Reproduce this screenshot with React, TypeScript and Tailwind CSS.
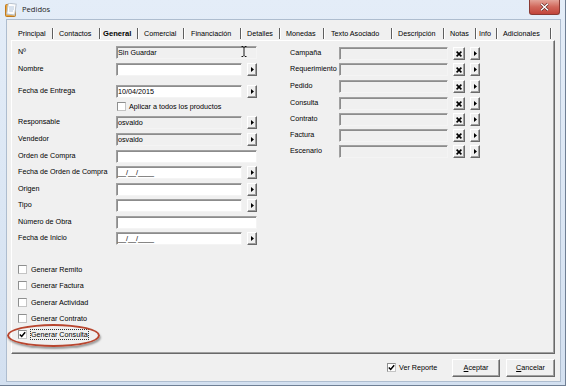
import React from "react";

function ArrowGlyph() {
  return (
    <svg width="3" height="5" viewBox="0 0 3 5">
      <path d="M0 0 L3 2.5 L0 5 Z" fill="#000" />
    </svg>
  );
}

function XGlyph() {
  return (
    <svg width="6" height="6" viewBox="0 0 6 6">
      <path d="M0.6 0.6 L5.4 5.4 M5.4 0.6 L0.6 5.4" stroke="#000" strokeWidth="1.6" />
    </svg>
  );
}

function SmallBtn({ wide, children }: { wide?: boolean; children: React.ReactNode }) {
  return (
    <div
      className={`${wide ? "w-[12px]" : "w-[10px]"} h-[13px] flex items-center justify-center bg-[#f0f0f0] border border-t-white border-l-white border-r-[#696969] border-b-[#696969] shadow-[inset_-1px_-1px_0_#a0a0a0]`}
    >
      {children}
    </div>
  );
}

function Field({
  w,
  gray,
  text,
  children,
}: {
  w: string;
  gray?: boolean;
  text?: string;
  children?: React.ReactNode;
}) {
  return (
    <div
      className={`${w} relative h-[13px] flex items-center pl-[1px] border border-t-[#a0a0a0] border-l-[#a0a0a0] border-r-[#f4f4f4] border-b-[#f4f4f4] shadow-[inset_1px_1px_0_#8c8c8c] whitespace-nowrap leading-[11px] ${
        gray ? "bg-[#f0f0f0]" : "bg-white"
      }`}
    >
      {text}
      {children}
    </div>
  );
}

function Check({ checked }: { checked?: boolean }) {
  return (
    <div className="w-[9px] h-[9px] shrink-0 bg-white border border-t-[#8e8f8f] border-l-[#8e8f8f] border-r-[#c4c4c4] border-b-[#c4c4c4] flex items-center justify-center">
      {checked && (
        <svg width="7" height="7" viewBox="0 0 7 7">
          <path d="M0.8 3.4 L2.7 5.4 L6.2 1.2" stroke="#000" strokeWidth="1.5" fill="none" />
        </svg>
      )}
    </div>
  );
}

function LRow({
  mt,
  label,
  full,
  gray,
  text,
  btn,
  children,
}: {
  mt: string;
  label: string;
  full?: boolean;
  gray?: boolean;
  text?: string;
  btn?: boolean;
  children?: React.ReactNode;
}) {
  return (
    <div className={`${mt} flex h-[13px] items-start`}>
      <div className="w-[98px] leading-[11px] whitespace-nowrap">{label}</div>
      <Field w={full ? "w-[141px]" : "w-[126px]"} gray={gray} text={text}>
        {children}
      </Field>
      {btn && (
        <div className="ml-[5px]">
          <SmallBtn>
            <ArrowGlyph />
          </SmallBtn>
        </div>
      )}
    </div>
  );
}

function RRow({ mt, label }: { mt: string; label: string }) {
  return (
    <div className={`${mt} flex h-[13px] items-start`}>
      <div className="w-[49px] leading-[11px] whitespace-nowrap">{label}</div>
      <Field w="w-[109px]" gray />
      <div className="ml-[5px]">
        <SmallBtn wide>
          <XGlyph />
        </SmallBtn>
      </div>
      <div className="ml-[5px]">
        <SmallBtn>
          <ArrowGlyph />
        </SmallBtn>
      </div>
    </div>
  );
}

function CRow({ mt, label, checked, focus }: { mt: string; label: string; checked?: boolean; focus?: boolean }) {
  return (
    <div className={`${mt} flex h-[11px] items-center`}>
      <Check checked={checked} />
      {focus ? (
        <span className="ml-[3px] leading-[9px] px-[0px] border border-dotted border-[#333] whitespace-nowrap">
          {label}
        </span>
      ) : (
        <span className="ml-[4px] leading-[11px] whitespace-nowrap">{label}</span>
      )}
    </div>
  );
}

const tabs: { label: string; w: string; m: string; bold?: boolean }[] = [
  { label: "Principal", w: "w-[34px]", m: "mr-[5px]" },
  { label: "Contactos", w: "w-[40px]", m: "mr-[2px]" },
  { label: "General", w: "w-[34px]", m: "mr-[5px]", bold: true },
  { label: "Comercial", w: "w-[39px]", m: "mr-[6px]" },
  { label: "Financiación", w: "w-[49px]", m: "mr-[5px]" },
  { label: "Detalles", w: "w-[32px]", m: "mr-[5px]" },
  { label: "Monedas", w: "w-[37px]", m: "mr-[6px]" },
  { label: "Texto Asociado", w: "w-[60px]", m: "mr-[5px]" },
  { label: "Descripción", w: "w-[45px]", m: "mr-[5px]" },
  { label: "Notas", w: "w-[25px]", m: "mr-[2px]" },
  { label: "Info", w: "w-[17px]", m: "mr-[5px]" },
  { label: "Adicionales", w: "w-[47px]", m: "mr-[0px]" },
];

export default function App() {
  return (
    <div className="relative w-[566px] h-[386px] overflow-hidden flex flex-col bg-gradient-to-b from-[#e4edf8] to-[#d3e0f0] border-r border-b border-[#6f7f94] font-['Liberation_Sans',Arial,sans-serif] text-[7.2px] text-black">
      {/* Title bar */}
      <div className="h-[19px] flex items-start shrink-0">
        <div className="ml-[5px] mt-[3px]">
          <svg width="12" height="14" viewBox="0 0 12 14">
            <rect x="0.5" y="1.5" width="10" height="12" rx="1" fill="#e9a33a" stroke="#c07a1c" />
            <rect x="2.5" y="0.5" width="8" height="11" fill="#fdfdfd" stroke="#b9c3cf" transform="rotate(8 6 6)" />
            <path d="M4 4 H9 M4 6 H9 M4 8 H8" stroke="#9fb6d3" strokeWidth="0.8" />
          </svg>
        </div>
        <div className="ml-[5px] mt-[3px] font-['Open_Sans',sans-serif] text-[7.6px] leading-[12px] text-[#1b1b1b]">
          Pedidos
        </div>
        <div className="ml-auto mr-[5px] w-[31px] h-[15px] rounded-b-[3px] border border-t-0 border-[#8a3a33] bg-gradient-to-b from-[#e3a398] via-[#d0665a] to-[#c2443a] flex items-center justify-center">
          <svg width="9" height="8" viewBox="0 0 9 8">
            <path d="M1 0.8 L8 7.2 M8 0.8 L1 7.2" stroke="#5a1e1a" strokeWidth="2.6" />
            <path d="M1 0.8 L8 7.2 M8 0.8 L1 7.2" stroke="#ffffff" strokeWidth="1.5" />
          </svg>
        </div>
      </div>

      {/* Client area */}
      <div className="ml-[6px] w-[555px] h-[363px] border border-[#aebdcf] bg-[#f0f0f0] flex flex-col shrink-0">
        {/* Tab strip */}
        <div className="h-[20px] pl-[11px] pt-[8px] flex items-start shrink-0">
          {tabs.map((t) => (
            <div key={t.label} className={`flex items-start ${t.m}`}>
              <div
                className={`${t.w} leading-[11px] whitespace-nowrap ${
                  t.bold ? "font-bold text-[7.6px]" : ""
                }`}
              >
                {t.label}
              </div>
              <div className="h-[11px] w-[2px] flex">
                <div className="w-[1px] h-full bg-[#5e5e5e]" />
                <div className="w-[1px] h-full bg-white" />
              </div>
            </div>
          ))}
        </div>

        {/* Panel */}
        <div className="ml-[4px] w-[544px] h-[314px] shrink-0 border border-t-white border-l-white border-r-[#696969] border-b-[#696969] shadow-[inset_-1px_-1px_0_#a0a0a0] flex items-start pl-[6px]">
          {/* Left column */}
          <div className="w-[239px] flex flex-col">
            <LRow mt="mt-[5px]" label="Nº" full gray text="Sin Guardar">
              <div className="absolute left-[124px] top-[-1px]">
                <svg width="6" height="11" viewBox="0 0 6 11">
                  <path d="M0.5 0.5 H2 L3 1.5 L4 0.5 H5.5 M3 1.5 V9.5 M0.5 10.5 H2 L3 9.5 L4 10.5 H5.5" stroke="#000" strokeWidth="0.9" fill="none" />
                </svg>
              </div>
            </LRow>
            <LRow mt="mt-[4px]" label="Nombre" btn />
            <LRow mt="mt-[9px]" label="Fecha de Entrega" btn text="10/04/2015" />
            <div className="mt-[3px] ml-[99px] flex h-[11px] items-center">
              <Check />
              <span className="ml-[3px] leading-[11px] whitespace-nowrap">Aplicar a todos los productos</span>
            </div>
            <LRow mt="mt-[4px]" label="Responsable" gray btn text="osvaldo" />
            <LRow mt="mt-[4px]" label="Vendedor" gray btn text="osvaldo" />
            <LRow mt="mt-[4px]" label="Orden de Compra" full />
            <LRow mt="mt-[3px]" label="Fecha de Orden de Compra" btn text="__/__/____" />
            <LRow mt="mt-[4px]" label="Origen" btn />
            <LRow mt="mt-[3px]" label="Tipo" btn />
            <LRow mt="mt-[4px]" label="Número de Obra" full />
            <LRow mt="mt-[3px]" label="Fecha de Inicio" btn text="__/__/____" />

            <CRow mt="mt-[19px]" label="Generar Remito" />
            <CRow mt="mt-[5px]" label="Generar Factura" />
            <CRow mt="mt-[6px]" label="Generar Actividad" />
            <CRow mt="mt-[5px]" label="Generar Contrato" />
            <CRow mt="mt-[5px]" label="Generar Consulta" checked focus />
          </div>

          {/* Right column */}
          <div className="ml-[33px] flex flex-col">
            <RRow mt="mt-[6px]" label="Campaña" />
            <RRow mt="mt-[3px]" label="Requerimiento" />
            <RRow mt="mt-[4px]" label="Pedido" />
            <RRow mt="mt-[4px]" label="Consulta" />
            <RRow mt="mt-[3px]" label="Contrato" />
            <RRow mt="mt-[3px]" label="Factura" />
            <RRow mt="mt-[3px]" label="Escenario" />
          </div>
        </div>

        {/* Bottom bar */}
        <div className="flex-1 flex items-center justify-end pr-[5px]">
          <Check checked />
          <span className="ml-[3px] w-[40px] leading-[11px] whitespace-nowrap">Ver Reporte</span>
          <button className="ml-[13px] w-[48px] h-[18px] bg-[#f0f0f0] border border-t-white border-l-white border-r-[#696969] border-b-[#696969] shadow-[inset_-1px_-1px_0_#a0a0a0] flex items-center justify-center leading-[11px]">
            <span>
              <span className="underline">A</span>ceptar
            </span>
          </button>
          <button className="ml-[6px] w-[49px] h-[18px] bg-[#f0f0f0] border border-t-white border-l-white border-r-[#696969] border-b-[#696969] shadow-[inset_-1px_-1px_0_#a0a0a0] flex items-center justify-center leading-[11px]">
            <span>
              <span className="underline">C</span>ancelar
            </span>
          </button>
        </div>
      </div>

      {/* Red annotation ellipse */}
      <div className="absolute left-[7px] top-[324px] w-[93px] h-[23px] rounded-[50%] border-2 border-[#b8462f] shadow-[1px_2px_2px_rgba(0,0,0,0.35)]" />
    </div>
  );
}
